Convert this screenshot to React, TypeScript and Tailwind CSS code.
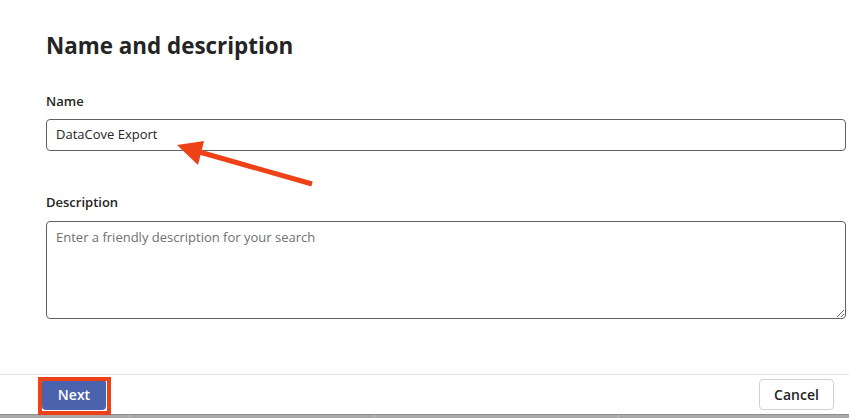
import React from 'react';

const font = { fontFamily: '"Open Sans", "Noto Sans", sans-serif' };

const Arrow = () => (
  <svg className="absolute left-0 top-0 pointer-events-none" width="849" height="418">
    <line x1="312" y1="184" x2="196" y2="151" stroke="#ee4117" strokeWidth="5" />
    <polygon points="177,145 204,141 198,165" fill="#ee4117" />
  </svg>
);

const App = () => {
  return (
    <div className="relative w-[849px] h-[418px] bg-white overflow-hidden flex flex-col text-[#242424]" style={font}>
      <div className="h-[374px] pl-[46px] pr-[3px] pt-[32px]">
        <h2 className="text-[22.4px] leading-[28px] font-bold">Name and description</h2>

        <label className="block mt-[32px] mb-[9px] text-[13px] leading-[18px] font-semibold">Name</label>
        <div className="h-[32px] border border-[#616161] rounded-[4px] flex items-center px-[9px] text-[13px]">
          DataCove Export
        </div>

        <label className="block mt-[42px] mb-[10px] text-[13px] leading-[18px] font-semibold">Description</label>
        <textarea
          readOnly
          className="block w-full h-[98px] border border-[#616161] rounded-[4px] px-[9px] py-[5px] text-[13px] leading-[20px] outline-none placeholder:text-[#707070]"
          placeholder="Enter a friendly description for your search"
        />
      </div>

      <div className="h-[40px] border-t border-[#e0e0e0] flex items-center justify-between pl-[42px] pr-[15px]">
        <button className="w-[64px] h-[31px] rounded-[4px] bg-[#4b63ad] text-white text-[14px] font-semibold">
          Next
        </button>
        <button className="w-[75px] h-[31px] rounded-[4px] border border-[#d1d1d1] bg-white text-[14px] font-semibold">
          Cancel
        </button>
      </div>

      <div className="h-[4px] bg-[#a9a9a9] border-t border-[#8f8f8f] flex">
        <div className="w-[130px] border-r border-[#c4c4c4]" />
        <div className="w-[245px] border-r border-[#c4c4c4]" />
        <div className="w-[244px] border-r border-[#c4c4c4]" />
        <div className="flex-1" />
      </div>

      <div className="absolute left-[38px] top-[377px] w-[73px] h-[38px] border-[4px] border-[#ee4117]" />
      <Arrow />
    </div>
  );
};

export default App;
